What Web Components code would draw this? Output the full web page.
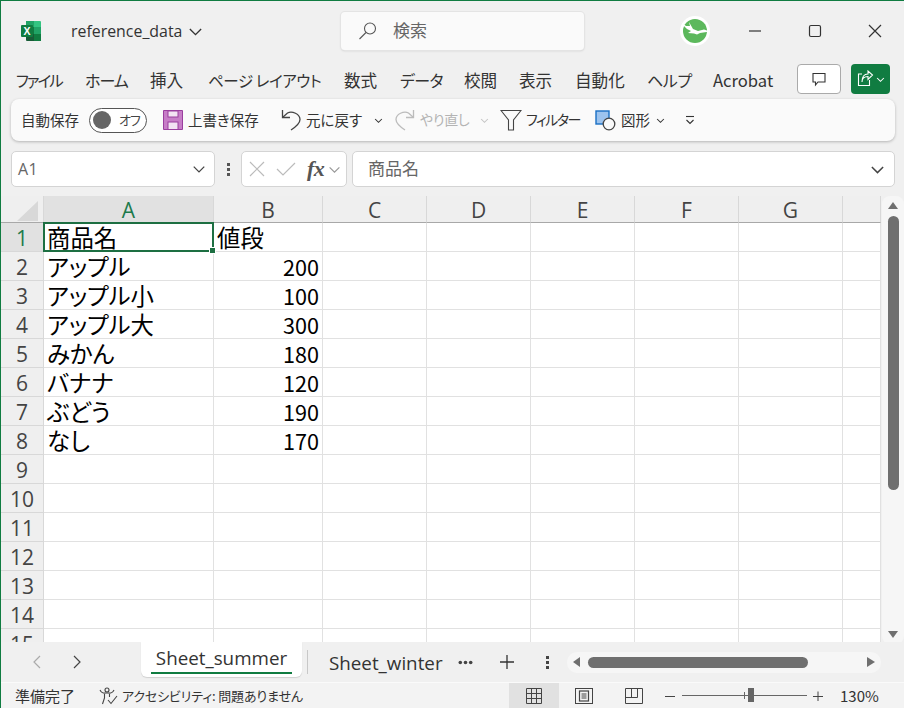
<!DOCTYPE html>
<html lang="ja">
<head>
<meta charset="utf-8">
<title>reference_data</title>
<style>
  html, body { margin: 0; padding: 0; background: #f0f0f0; overflow: hidden; }
</style>
</head>
<body>
<xl-app>
  <xl-titlebar name="reference_data"></xl-titlebar>
  <xl-ribbon-tabs></xl-ribbon-tabs>
  <xl-toolbar></xl-toolbar>
  <xl-formula-bar cell="A1" value="商品名"></xl-formula-bar>
  <xl-sheet></xl-sheet>
  <xl-sheet-tabs></xl-sheet-tabs>
  <xl-statusbar></xl-statusbar>
</xl-app>

<script>
const UI_FONT = `"Noto Sans CJK JP", sans-serif`
const LATIN_FONT = `"Open Sans", "Noto Sans CJK JP", sans-serif`

// shared base class, each element only passes its own markup
class ShadowBase extends HTMLElement {
  constructor () {
    super()
    this.attachShadow({ mode: 'open' })
  }
  connectedCallback () {
    this.shadowRoot.innerHTML = this.render()
  }
}

const chevron = (w, color, sw) => `<svg width="${w}" height="${w}" viewBox="0 0 12 12" fill="none" stroke="${color}" stroke-width="${sw}"><path d="M1.5 4 L6 8.5 L10.5 4"/></svg>`

class XlApp extends ShadowBase {
  render () {
    return `<style>
      :host { display: flex; flex-direction: column; width: 904px; height: 708px; box-sizing: border-box;
        border-top: 1px solid #107c41; background: #f0f0f0; overflow: hidden; position: relative; }
      .edge { position: absolute; left: 0; top: 0; bottom: 0; width: 1px; background: #107c41; z-index: 5; }
    </style><div class="edge"></div><slot></slot>`
  }
}

class XlTitlebar extends ShadowBase {
  render () {
    return `<style>
      :host { display: flex; align-items: center; height: 60px; flex: none; font-family: ${LATIN_FONT}; color: #333; }
      :host > * { flex: none; }
      .logo { margin-left: 20px; width: 22px; height: 22px; }
      .name { margin-left: 29px; font-size: 15.9px; width: 113px; white-space: nowrap; margin-top: -1px; }
      .chev { margin-left: 4px; display: flex; }
      .search { margin-left: 138px; width: 243px; height: 38px; box-sizing: border-box; background: #fafafa; border-radius: 4px;
        box-shadow: 0 0 0 1px #e4e4e4, 0 1px 2px #c8c8c8; display: flex; align-items: center; padding-left: 17px; font-family: ${UI_FONT}; font-size: 17px; color: #666; }
      .search span { margin-left: 15px; margin-top: -3px; }
      .avatar { margin-left: 96px; width: 30px; height: 30px; }
      .win { display: flex; margin-left: 15px; }
      .win div { width: 60px; height: 30px; display: flex; align-items: center; justify-content: center; }
    </style>
    <svg class="logo" viewBox="0 0 22 22">
      <path d="M6 1 H20 a1 1 0 0 1 1 1 V7 H6 Z" fill="#33c481"/>
      <rect x="6" y="1" width="8" height="6" fill="#21a366"/>
      <rect x="14" y="7" width="7" height="7" fill="#21a366"/>
      <rect x="6" y="7" width="8" height="7" fill="#107c41"/>
      <rect x="14" y="14" width="7" height="7" fill="#107c41"/>
      <path d="M6 14 H14 V21 H7 a1 1 0 0 1 -1 -1 Z" fill="#185c37"/>
      <rect x="1" y="5" width="12" height="12" rx="1" fill="#107c41"/>
      <text x="7" y="14.6" text-anchor="middle" font-family="Liberation Sans" font-weight="700" font-size="10.5" fill="#fff">X</text>
    </svg>
    <div class="name">${this.getAttribute('name')}</div>
    <div class="chev">${chevron(15, '#333', 1.1)}</div>
    <div class="search">
      <svg width="20" height="20" viewBox="0 0 20 20" fill="none" stroke="#555" stroke-width="1.1"><circle cx="12" cy="7.5" r="5.5"/><path d="M8 11.5 L1.5 18"/></svg>
      <span>検索</span>
    </div>
    <svg class="avatar" viewBox="0 0 30 30">
      <circle cx="15" cy="15" r="15" fill="#fff"/>
      <circle cx="15" cy="15" r="12" fill="#5cb85c"/>
      <path d="M1 6 L6 10 L10 10 L9 6 L13 13 L18 15 L24 13.5 L30 15.5 L20 17 L17 18.5 L14 17.5 L8 17 L11 15 L7 13 L4 10 Z" fill="#fff"/>
    </svg>
    <div class="win">
      <div><svg width="14" height="14" viewBox="0 0 14 14"><path d="M1 7 H13" stroke="#333" stroke-width="1.2"/></svg></div>
      <div><svg width="14" height="14" viewBox="0 0 14 14"><rect x="1.5" y="1.5" width="11" height="11" rx="1.5" fill="none" stroke="#333" stroke-width="1.2"/></svg></div>
      <div><svg width="14" height="14" viewBox="0 0 14 14"><path d="M1 1 L13 13 M13 1 L1 13" stroke="#333" stroke-width="1.2"/></svg></div>
    </div>`
  }
}

class XlRibbonTabs extends ShadowBase {
  render () {
    // label, left gap to the previous label, label width, extra style
    const tabs = [
      ['ファイル', 16, 47, 'font-size:15.5px;letter-spacing:-2px'],
      ['ホーム', 22, 43, 'font-size:16px;letter-spacing:-1px'],
      ['挿入', 22, 34, ''],
      ['ページ レイアウト', 24, 114, 'font-size:15.5px;letter-spacing:-.4px'],
      ['数式', 22, 34, ''],
      ['データ', 22, 43, 'font-size:16px;letter-spacing:-.6px'],
      ['校閲', 21, 34, ''],
      ['表示', 21, 34, ''],
      ['自動化', 22, 51, ''],
      ['ヘルプ', 21, 42, 'font-size:16px;letter-spacing:-.4px'],
      ['Acrobat', 24, 65, `font-family:${LATIN_FONT};font-size:17.3px`]
    ]
    return `<style>
      :host { display: flex; align-items: center; height: 36px; flex: none; font-family: ${UI_FONT}; font-size: 16.6px; color: #333; font-feature-settings: "palt"; }
      :host > * { flex: none; }
      span { display: block; white-space: nowrap; margin-top: 2px; line-height: 24px; }
      .comment { margin-left: 19px; width: 44px; height: 30px; box-sizing: border-box; background: #fff; border: 1px solid #aaa; border-radius: 4px; display: flex; align-items: center; justify-content: center; }
      .share { margin-left: 10px; width: 39px; height: 30px; background: #107c41; border-radius: 4px; display: flex; align-items: center; justify-content: center; gap: 2px; }
    </style>
    ${tabs.map(t => `<span style="margin-left:${t[1]}px;width:${t[2]}px;${t[3]}">${t[0]}</span>`).join('')}
    <div class="comment"><svg width="16" height="16" viewBox="0 0 16 16" fill="none" stroke="#333" stroke-width="1.1"><path d="M2 2.5 H14 V11 H7 L4.5 14 V11 H2 Z"/></svg></div>
    <div class="share">
      <svg width="18" height="18" viewBox="0 0 18 18" fill="none" stroke="#fff" stroke-width="1.1"><path d="M6 4 H2.5 V15.5 H13.5 V10"/><path d="M6 12 C6 8 9 6.5 12 6.5 V9.5 L16.5 5 L12 1 V4 C8 4 6 7 6 12 Z"/></svg>
      ${chevron(9, '#fff', 1.4)}
    </div>`
  }
}

class XlToolbar extends ShadowBase {
  render () {
    return `<style>
      :host { display: flex; align-items: center; flex: none; margin: 2px 9px 0 11px; height: 42px; background: #fafafa; border-radius: 8px;
        box-shadow: 0 1px 3px rgba(0,0,0,.25); font-family: ${UI_FONT}; font-size: 14.5px; color: #333; font-feature-settings: "palt"; }
      :host > * { flex: none; }
      span { white-space: nowrap; display: block; margin-top: -2px; }
      svg { display: block; }
      .toggle { margin-left: 9px; width: 58px; height: 25px; box-sizing: border-box; border: 1px solid #555; border-radius: 13px; display: flex; align-items: center; padding-left: 3px; background: #fff; }
      .toggle i { width: 18px; height: 18px; border-radius: 50%; background: #666; }
      .toggle b { font-weight: 400; font-size: 13px; margin: -2px 0 0 8px; color: #444; letter-spacing: -1px; }
      .off { color: #b4b4b4; font-size: 14px; }
      .tight { font-size: 14px; letter-spacing: -1.5px; }
    </style>
    <span style="margin-left:10px;width:59px">自動保存</span>
    <div class="toggle"><i></i><b>オフ</b></div>
    <svg style="margin-left:16px" width="20" height="20" viewBox="0 0 20 20"><path d="M0.5 0.5 H19.5 V19.5 H0.5 Z" fill="#c77dc7" stroke="#9a3e9e"/><rect x="5" y="1" width="10" height="6" fill="#f3e3f3" stroke="#9a3e9e"/><rect x="5" y="12" width="10" height="7.5" fill="#f3e3f3" stroke="#9a3e9e"/></svg>
    <span style="margin-left:5px;width:71px">上書き保存</span>
    <svg style="margin-left:22px" width="20" height="22" viewBox="0 0 20 22" fill="none" stroke="#444" stroke-width="1.3"><path d="M1.5 1 V8.5 H9"/><path d="M1.5 8.5 L6.5 4 C11 1.5 19 5 19 10.5 C19 13.5 16 17 10 21"/></svg>
    <span style="margin-left:5px;width:56px">元に戻す</span>
    <span style="margin:0 0 0 12px;display:flex">${chevron(9, '#333', 1.4)}</span>
    <svg style="margin-left:12px" width="20" height="22" viewBox="0 0 20 22" fill="none" stroke="#bcbcbc" stroke-width="1.3"><path d="M18.5 1 V8.5 H11"/><path d="M18.5 8.5 L13.5 4 C9 1.5 1 5 1 10.5 C1 13.5 4 17 10 21"/></svg>
    <span class="off" style="margin-left:5px;width:48px;letter-spacing:-.3px">やり直し</span>
    <span style="margin:0 0 0 12px;display:flex">${chevron(9, '#c4c4c4', 1.4)}</span>
    <svg style="margin-left:11px" width="22" height="22" viewBox="0 0 22 22" fill="none" stroke="#444" stroke-width="1.1"><path d="M1 1.5 H21 L13.5 11 V21 H8.5 V11 Z"/></svg>
    <span class="tight" style="margin-left:4px;width:52px">フィルター</span>
    <svg style="margin-left:17px" width="21" height="21" viewBox="0 0 21 21"><rect x="1" y="1" width="13" height="13" fill="#9cc3ee" stroke="#1a6fc4" stroke-width="1.4"/><circle cx="14" cy="14" r="5.8" fill="#fafafa" stroke="#444" stroke-width="1.3"/></svg>
    <span style="margin-left:5px;width:31px">図形</span>
    <span style="margin:0 0 0 4px;display:flex">${chevron(9, '#333', 1.4)}</span>
    <svg style="margin-left:20px" width="10" height="10" viewBox="0 0 10 10" fill="none" stroke="#333" stroke-width="1.1"><path d="M1 1.5 H9"/><path d="M1.5 5 L5 8.5 L8.5 5"/></svg>`
  }
}

class XlFormulaBar extends ShadowBase {
  render () {
    return `<style>
      :host { display: flex; align-items: stretch; flex: none; height: 36px; margin: 10px 9px 0 11px; font-family: ${UI_FONT}; font-size: 17px; color: #666; }
      .box { background: #fff; border: 1px solid #d4d4d4; border-radius: 5px; box-sizing: border-box; display: flex; align-items: center; flex: none; }
      .name { width: 204px; padding: 0 8px 0 6px; justify-content: space-between; font-family: ${LATIN_FONT}; font-size: 16px; letter-spacing: .5px; }
      .dots { width: 26px; flex: none; display: flex; flex-direction: column; gap: 2px; align-items: center; justify-content: center; }
      .dots i { width: 3px; height: 3px; background: #555; }
      .fx { width: 106px; padding-left: 7px; }
      .fx em { font-family: "Liberation Serif", serif; font-size: 22px; font-weight: 700; color: #555; margin-left: 11px; letter-spacing: -.5px; }
      .input { flex: 1; margin-left: 5px; padding: 0 9px 0 15px; justify-content: space-between; }
      .input span { margin-top: -3px; }
    </style>
    <div class="box name"><span>${this.getAttribute('cell')}</span>${chevron(14, '#444', 1.1)}</div>
    <div class="dots"><i></i><i></i><i></i></div>
    <div class="box fx">
      <svg width="16" height="16" viewBox="0 0 16 16" stroke="#bbb" stroke-width="1.2"><path d="M1 1 L15 15 M15 1 L1 15"/></svg>
      <svg style="margin-left:11px" width="20" height="16" viewBox="0 0 20 16" fill="none" stroke="#bbb" stroke-width="1.2"><path d="M1 8 L7 14 L19 2"/></svg>
      <em>fx</em>
      <span style="display:flex;margin:0 0 0 4px">${chevron(13, '#999', 1.1)}</span>
    </div>
    <div class="box input"><span>${this.getAttribute('value')}</span>${chevron(15, '#444', 1.2)}</div>`
  }
}

class XlSheet extends ShadowBase {
  render () {
    const cols = ['A', 'B', 'C', 'D', 'E', 'F', 'G', '']
    const data = [
      ['商品名', '値段'], ['アップル', '200'], ['アップル小', '100'], ['アップル大', '300'],
      ['みかん', '180'], ['バナナ', '120'], ['ぶどう', '190'], ['なし', '170']
    ]
    let cells = `<div class="corner"><svg width="24" height="22" viewBox="0 0 24 22"><path d="M22 1 V21 H1 Z" fill="#d8d8d8"/></svg></div>`
    cols.forEach((c, i) => { cells += `<div class="ch ${i === 0 ? 'sel' : ''}">${c}</div>` })
    for (let r = 1; r <= 15; r++) {
      cells += `<div class="rh ${r === 1 ? 'sel' : ''}">${r}</div>`
      cols.forEach((c, i) => {
        const v = (data[r - 1] && data[r - 1][i]) || ''
        const num = /^\d+$/.test(v)
        cells += `<div class="c ${num ? 'num' : ''}">${v}</div>`
      })
    }
    return `<style>
      :host { display: flex; flex: 1; min-height: 0; margin-top: 9px; position: relative; overflow: hidden; }
      .grid { display: grid; grid-template-columns: 44px 170px 109px 104px 104px 104px 104px 104px 38px; grid-template-rows: 27px repeat(15, 29px); width: 881px; height: 446px; overflow: hidden; background: #fff; position: relative; flex: none; }
      .corner, .ch { background: #efefef; border-right: 1px solid #d8d8d8; border-bottom: 1px solid #a8a8a8; box-sizing: border-box; }
      .corner { display: flex; align-items: flex-end; justify-content: flex-end; padding: 0 3px 0 0; }
      .ch { display: flex; align-items: center; justify-content: center; font: 21px ${LATIN_FONT}; color: #444; padding-top: 1px; }
      .ch:last-of-type { border-right: 0; }
      .rh { background: #efefef; border-right: 1px solid #d8d8d8; border-bottom: 1px solid #d8d8d8; box-sizing: border-box; display: flex; align-items: center; justify-content: center; font: 21px ${LATIN_FONT}; color: #444; padding: 2px 0 0 1px; }
      .sel { background: #e1e1e1; color: #1d7a4c; }
      .c { border-right: 1px solid #e1e1e1; border-bottom: 1px solid #e1e1e1; box-sizing: border-box; padding: 1px 3px 0 3px; font: 23.4px/27px "Noto Sans CJK JP", sans-serif; color: #000; white-space: nowrap; font-feature-settings: "palt"; }
      .num { text-align: right; font-size: 21.6px; }
      .cursor { position: absolute; left: 43px; top: 26px; width: 171px; height: 30px; box-sizing: border-box; border: 2px solid #1d6f42; pointer-events: none; }
      .cursor i { position: absolute; right: -4px; bottom: -4px; width: 5px; height: 5px; background: #1d6f42; border: 1px solid #fff; }
      .vbar { flex: 1; position: relative; }
      .track { position: absolute; left: 1px; right: 0; top: 0; bottom: -2px; background: #f6f6f6; border-radius: 8px; display: flex; flex-direction: column; align-items: center; }
      .thumb { width: 11px; height: 274px; background: #6f6f6f; border-radius: 6px; margin-top: 7px; }
      .up, .down { width: 0; height: 0; border-left: 5.5px solid transparent; border-right: 5.5px solid transparent; }
      .up { border-bottom: 7px solid #6f6f6f; margin-top: 6px; }
      .down { border-top: 7px solid #6f6f6f; margin-top: auto; margin-bottom: 6px; }
    </style>
    <div class="grid">${cells}<div class="cursor"><i></i></div></div>
    <div class="vbar"><div class="track"><div class="up"></div><div class="thumb"></div><div class="down"></div></div></div>`
  }
}

class XlSheetTabs extends ShadowBase {
  render () {
    return `<style>
      :host { display: flex; align-items: center; height: 40px; flex: none; font-family: ${LATIN_FONT}; color: #333; font-size: 18.8px; background: #f0f0f0; }
      :host > * { flex: none; }
      svg { display: block; }
      .active { margin-left: 58px; width: 161px; height: 35px; align-self: flex-start; box-sizing: border-box; background: #fff; border-radius: 0 0 6px 6px; box-shadow: 0 1px 1px #d0d0d0; display: flex; flex-direction: column; align-items: center; padding-top: 3px; }
      .active span { line-height: 24px; margin-top: 1px; }
      .active i { width: 141px; height: 2px; background: #107c41; margin-top: 2px; }
      .sep { margin-left: 5px; width: 1px; height: 24px; background: #c8c8c8; align-self: flex-start; margin-top: 8px; }
      .other { margin-left: 21px; width: 114px; white-space: nowrap; margin-top: 1px; }
      .hs { margin-left: 18px; width: 314px; height: 21px; background: #f6f6f6; border-radius: 10px; display: flex; align-items: center; box-sizing: border-box; padding: 0 6px; }
      .hs i { width: 220px; height: 11px; border-radius: 6px; background: #6f6f6f; margin-left: 8px; }
      .l, .r { width: 0; height: 0; border-top: 5.5px solid transparent; border-bottom: 5.5px solid transparent; }
      .l { border-right: 7px solid #6f6f6f; }
      .r { border-left: 8px solid #6f6f6f; margin-left: auto; }
    </style>
    <svg style="margin-left:31px" width="12" height="14" viewBox="0 0 12 14" fill="none" stroke="#aaa" stroke-width="1.2"><path d="M9 1 L3 7 L9 13"/></svg>
    <svg style="margin-left:28px" width="12" height="14" viewBox="0 0 12 14" fill="none" stroke="#444" stroke-width="1.2"><path d="M3 1 L9 7 L3 13"/></svg>
    <div class="active"><span>Sheet_summer</span><i></i></div>
    <div class="sep"></div>
    <div class="other">Sheet_winter</div>
    <svg style="margin-left:15px" width="15" height="5" viewBox="0 0 15 5" fill="#444"><circle cx="2.3" cy="2.5" r="1.8"/><circle cx="7.5" cy="2.5" r="1.8"/><circle cx="12.7" cy="2.5" r="1.8"/></svg>
    <svg style="margin-left:26px" width="16" height="16" viewBox="0 0 16 16" stroke="#333" stroke-width="1.3"><path d="M1 8 H15 M8 1 V15"/></svg>
    <svg style="margin-left:31px" width="3" height="13" viewBox="0 0 3 13" fill="#444"><rect width="3" height="3"/><rect y="5" width="3" height="3"/><rect y="10" width="3" height="3"/></svg>
    <div class="hs"><div class="l"></div><i></i><div class="r"></div></div>`
  }
}

class XlStatusbar extends ShadowBase {
  render () {
    return `<style>
      :host { display: flex; align-items: center; height: 25px; flex: none; background: #f3f3f3; border-top: 1px solid #fafafa; font-family: ${UI_FONT}; font-size: 15px; color: #333; font-feature-settings: "palt"; }
      :host > * { flex: none; }
      span { white-space: nowrap; display: block; }
      svg { display: block; }
      .view { width: 50px; height: 25px; display: flex; align-items: center; justify-content: center; box-sizing: border-box; padding-right: 1px; }
      .view.on { background: #e1e1e1; }
      .slider { margin-left: 7px; width: 125px; height: 1px; background: #666; position: relative; }
      .slider i { position: absolute; left: 66px; top: -7px; width: 6px; height: 14px; background: #666; }
      .slider b { position: absolute; left: 62px; top: -3px; width: 1px; height: 7px; background: #666; }
    </style>
    <span style="margin-left:15px;width:61px">準備完了</span>
    <svg style="margin-left:23px" width="20" height="18" viewBox="0 0 20 18" fill="none" stroke="#444" stroke-width="1.1"><circle cx="8" cy="3" r="2"/><path d="M1 3 C3 7 5 6 8 6 C11 6 13 7 15 3"/><path d="M5.5 7 V11 L3.5 17 M10.5 7 V10"/><path d="M9 13 L12 16.5 L18 9"/></svg>
    <span style="margin-left:3px;width:182px;font-size:13px;letter-spacing:-.15px">アクセシビリティ: 問題ありません</span>
    <div class="view on" style="margin-left:205px"><svg width="16" height="16" viewBox="0 0 16 16" fill="none" stroke="#444" stroke-width="1"><path d="M.5 .5 H15.5 V15.5 H.5 Z M.5 5.5 H15.5 M.5 10.5 H15.5 M5.5 .5 V15.5 M10.5 .5 V15.5"/></svg></div>
    <div class="view"><svg width="18" height="16" viewBox="0 0 18 16" fill="none" stroke="#444" stroke-width="1"><rect x=".5" y=".5" width="17" height="15"/><rect x="4.5" y="3" width="9" height="10" stroke-width="1.2"/><path d="M6.5 6 H11.5 M6.5 8 H11.5 M6.5 10 H11.5"/></svg></div>
    <div class="view"><svg width="18" height="16" viewBox="0 0 18 16" fill="none" stroke="#444" stroke-width="1"><path d="M.5 .5 H17.5 V15.5 H.5 Z M.5 9.5 H12.5 V.5 M6.5 .5 V9.5"/></svg></div>
    <svg style="margin-left:6px" width="10" height="10" viewBox="0 0 10 10" stroke="#444"><path d="M0 5.5 H10"/></svg>
    <div class="slider"><b></b><i></i></div>
    <svg style="margin-left:6px" width="10" height="10" viewBox="0 0 10 10" stroke="#444"><path d="M0 5.5 H10 M5 .5 V10.5"/></svg>
    <span style="margin-left:17px;font-family:${LATIN_FONT};font-size:17px">130%</span>`
  }
}

customElements.define('xl-app', XlApp)
customElements.define('xl-titlebar', XlTitlebar)
customElements.define('xl-ribbon-tabs', XlRibbonTabs)
customElements.define('xl-toolbar', XlToolbar)
customElements.define('xl-formula-bar', XlFormulaBar)
customElements.define('xl-sheet', XlSheet)
customElements.define('xl-sheet-tabs', XlSheetTabs)
customElements.define('xl-statusbar', XlStatusbar)
</script>
</body>
</html>
